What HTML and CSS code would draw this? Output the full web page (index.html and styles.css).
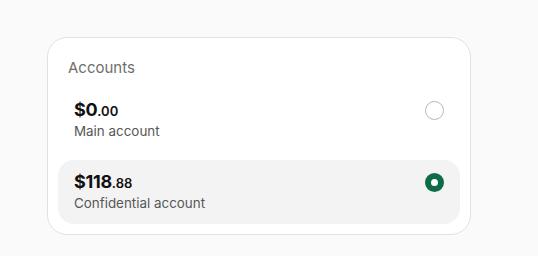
FILE: index.html
```html
<!DOCTYPE html>
<html>
<head>
<meta charset="utf-8">
<link rel="stylesheet" href="styles.css">
</head>
<body>
<div class="page">
  <section class="card">
    <h2 class="card-title">Accounts</h2>
    <label class="account">
      <div class="account-info">
        <div class="amount">$0<span class="cents">.00</span></div>
        <div class="name">Main account</div>
      </div>
      <span class="radio"></span>
    </label>
    <label class="account selected">
      <div class="account-info">
        <div class="amount">$118<span class="cents">.88</span></div>
        <div class="name">Confidential account</div>
      </div>
      <span class="radio checked"></span>
    </label>
  </section>
</div>
</body>
</html>
```

FILE: styles.css
```css
* { box-sizing: border-box; }
html, body { margin: 0; padding: 0; }
body {
  background: #fafafa;
  font-family: Inter, "Noto Sans", sans-serif;
  width: 538px;
  height: 256px;
  overflow: hidden;
}
.page {
  padding: 37px 0 0 47px;
}
.card {
  width: 424px;
  background: #ffffff;
  border: 1px solid #e2e2e2;
  border-radius: 20px;
  padding: 10px;
  display: flex;
  flex-direction: column;
  gap: 8px;
}
.card-title {
  margin: 0;
  height: 32px;
  padding: 10px 10px 0;
  font-size: 15px;
  line-height: 20px;
  font-weight: 400;
  color: #6e6e6e;
}
.account {
  height: 64px;
  border-radius: 16px;
  padding: 11px 16px 0;
  display: flex;
  align-items: flex-start;
  justify-content: space-between;
}
.account.selected { background: #f3f3f3; }
.account-info {
  display: flex;
  flex-direction: column;
}
.amount {
  font-size: 18px;
  line-height: 22px;
  font-weight: 700;
  color: #111;
  letter-spacing: -0.3px;
}
.cents {
  font-size: 13px;
  font-weight: 600;
  letter-spacing: 0;
}
.name {
  font-size: 13.4px;
  line-height: 18px;
  color: #575757;
}
.radio {
  margin-top: 2px;
  width: 19px;
  height: 19px;
  border-radius: 50%;
  border: 1px solid #b8b8b8;
  background: #fff;
}
.radio.checked {
  border: 6px solid #0e6b47;
  background: #fff;
}
```
